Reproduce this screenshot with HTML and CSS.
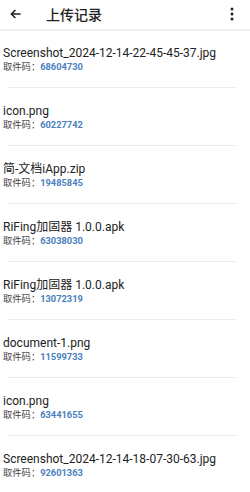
FILE: index.html
```html
<!DOCTYPE html>
<html lang="zh">
<head>
<meta charset="utf-8">
<link rel="stylesheet" href="styles.css">
</head>
<body>
<header class="bar">
  <svg class="back" width="14" height="14" viewBox="0 0 24 24"><path d="M20 12H5M11 5l-7 7 7 7" fill="none" stroke="#222" stroke-width="2.6"/></svg>
  <h1 class="title">上传记录</h1>
  <svg class="more" width="6" height="14" viewBox="0 0 6 14"><circle cx="3" cy="2" r="1.5" fill="#222"/><circle cx="3" cy="7" r="1.5" fill="#222"/><circle cx="3" cy="12" r="1.5" fill="#222"/></svg>
</header>
<ul class="list">
  <li class="item"><div class="name">Screenshot_2024-12-14-22-45-45-37.jpg</div><div class="code">取件码：<span class="num">68604730</span></div></li>
  <li class="item"><div class="name">icon.png</div><div class="code">取件码：<span class="num">60227742</span></div></li>
  <li class="item"><div class="name">简-文档iApp.zip</div><div class="code">取件码：<span class="num">19485845</span></div></li>
  <li class="item"><div class="name">RiFing加固器 1.0.0.apk</div><div class="code">取件码：<span class="num">63038030</span></div></li>
  <li class="item"><div class="name">RiFing加固器 1.0.0.apk</div><div class="code">取件码：<span class="num">13072319</span></div></li>
  <li class="item"><div class="name">document-1.png</div><div class="code">取件码：<span class="num">11599733</span></div></li>
  <li class="item"><div class="name">icon.png</div><div class="code">取件码：<span class="num">63441655</span></div></li>
  <li class="item"><div class="name">Screenshot_2024-12-14-18-07-30-63.jpg</div><div class="code">取件码：<span class="num">92601363</span></div></li>
</ul>
</body>
</html>
```
FILE: styles.css
```css
* { box-sizing: border-box; }
html, body { margin: 0; padding: 0; background: #fff; }
body { font-family: Roboto, "Noto Sans CJK SC", sans-serif; color: #222; width: 250px; overflow: hidden; }
.bar { height: 31px; display: flex; align-items: center; border-bottom: 2px solid #f1f1f1; padding: 0 0 2px 9px; }
.back { flex: none; }
.title { margin: 0 0 0 23px; font-size: 14px; font-weight: 500; flex: 1; }
.more { margin-right: 15px; }
.list { list-style: none; margin: 0; padding: 0; }
.item { padding: 14px 0 14px 3px; }
.item + .item::before { content: ""; display: block; height: 1px; background: #ececec; margin: -14px 14px 15px 5px; }
.name { font-size: 12px; line-height: 16px; white-space: nowrap; }
.code { font-size: 9.3px; line-height: 12px; color: #444; }
.num { color: #4a7fc0; font-weight: 700; }
```
